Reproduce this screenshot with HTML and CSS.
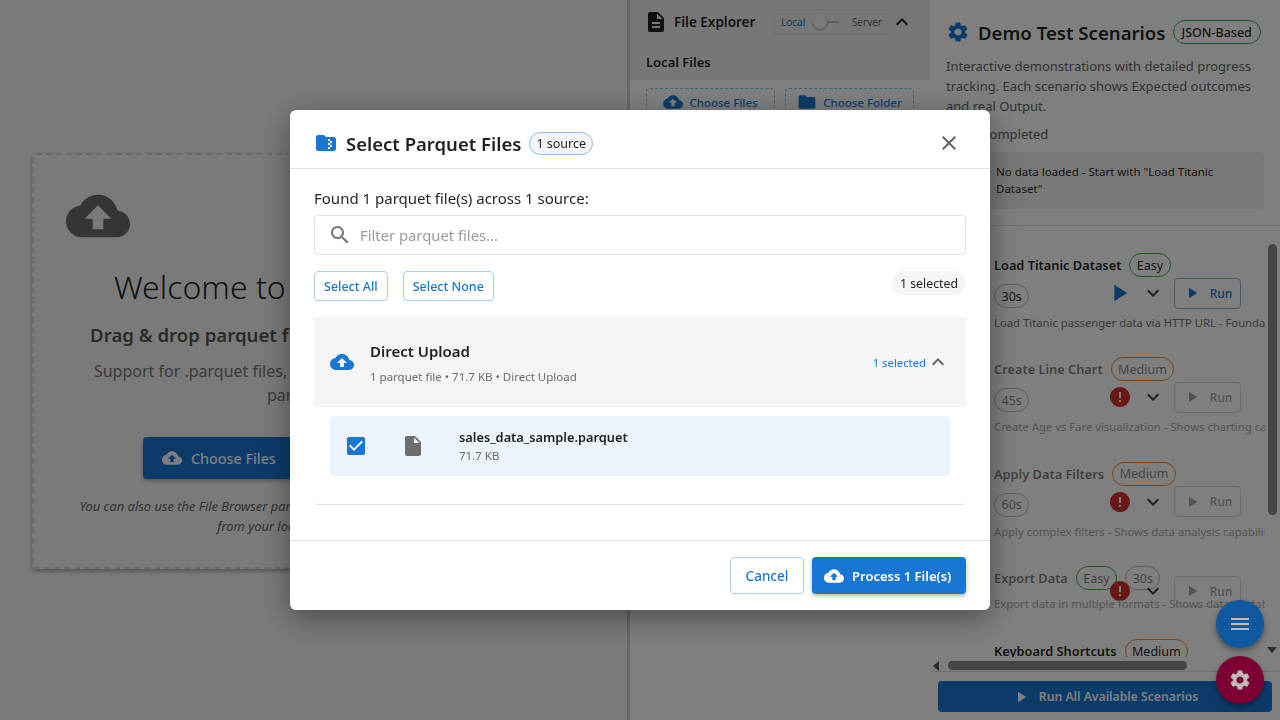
FILE: index.html
```html
<!DOCTYPE html>
<html>
	<head>
		<meta http-equiv="Content-Type" content="text/html; charset=UTF-8" />
		<title>Parquet Explorer</title>
		<link rel="stylesheet" href="styles.css">
	</head>

	<body>
		<svg class="defs" width="0" height="0">
			<symbol id="i-cloud" viewBox="0 0 24 24"><path d="M19.35 10.04C18.67 6.59 15.64 4 12 4 9.11 4 6.6 5.64 5.35 8.04 2.34 8.36 0 10.91 0 14c0 3.31 2.69 6 6 6h13c2.76 0 5-2.24 5-5 0-2.64-2.05-4.78-4.65-4.96zM14 13v4h-4v-4H7l5-5 5 5h-3z"/></symbol>
			<symbol id="i-close" viewBox="0 0 24 24"><path d="M19 6.41 17.59 5 12 10.59 6.41 5 5 6.41 10.59 12 5 17.59 6.41 19 12 13.41 17.59 19 19 17.59 13.41 12z"/></symbol>
			<symbol id="i-search" viewBox="0 0 24 24"><path d="M15.5 14h-.79l-.28-.27C15.41 12.59 16 11.11 16 9.5 16 5.91 13.09 3 9.5 3S3 5.91 3 9.5 5.91 16 9.5 16c1.61 0 3.09-.59 4.23-1.57l.27.28v.79l5 4.99L20.49 19l-4.99-5zm-6 0C7.01 14 5 11.99 5 9.5S7.01 5 9.5 5 14 7.01 14 9.5 11.99 14 9.5 14z"/></symbol>
			<symbol id="i-zip" viewBox="0 0 24 24"><path d="M20 6h-8l-2-2H4c-1.1 0-1.99.9-1.99 2L2 18c0 1.1.9 2 2 2h16c1.1 0 2-.9 2-2V8c0-1.1-.9-2-2-2zm-2 6h-2v2h2v2h-2v2h-2v-2h2v-2h-2v-2h2v-2h-2V8h2v2h2v2z"/></symbol>
			<symbol id="i-file" viewBox="0 0 24 24"><path d="M6 2c-1.1 0-1.99.9-1.99 2L4 20c0 1.1.89 2 1.99 2H18c1.1 0 2-.9 2-2V8l-6-6H6zm7 7V3.5L18.5 9H13z"/></symbol>
			<symbol id="i-doc" viewBox="0 0 24 24"><path d="M14 2H6c-1.1 0-1.99.9-1.99 2L4 20c0 1.1.89 2 1.99 2H18c1.1 0 2-.9 2-2V8l-6-6zm2 16H8v-2h8v2zm0-4H8v-2h8v2zm-3-5V3.5L18.5 9H13z"/></symbol>
			<symbol id="i-check" viewBox="0 0 24 24"><path d="M19 3H5c-1.11 0-2 .9-2 2v14c0 1.1.89 2 2 2h14c1.11 0 2-.9 2-2V5c0-1.1-.89-2-2-2zm-9 14l-5-5 1.41-1.41L10 14.17l7.59-7.59L19 8l-9 9z"/></symbol>
			<symbol id="i-up" viewBox="0 0 24 24"><path d="M12 8l-6 6 1.41 1.41L12 10.83l4.59 4.58L18 14z"/></symbol>
			<symbol id="i-down" viewBox="0 0 24 24"><path d="M16.59 8.59 12 13.17 7.41 8.59 6 10l6 6 6-6z"/></symbol>
			<symbol id="i-play" viewBox="0 0 24 24"><path d="M8 5v14l11-7z"/></symbol>
			<symbol id="i-error" viewBox="0 0 24 24"><path d="M12 2C6.48 2 2 6.48 2 12s4.48 10 10 10 10-4.48 10-10S17.52 2 12 2zm1 15h-2v-2h2v2zm0-4h-2V7h2v6z"/></symbol>
			<symbol id="i-menu" viewBox="0 0 24 24"><path d="M3 18h18v-2H3v2zm0-5h18v-2H3v2zm0-7v2h18V6H3z"/></symbol>
			<symbol id="i-gear" viewBox="0 0 24 24"><path d="M19.14 12.94c.04-.3.06-.61.06-.94 0-.32-.02-.64-.07-.94l2.03-1.58c.18-.14.23-.41.12-.61l-1.92-3.32c-.12-.22-.37-.29-.59-.22l-2.39.96c-.5-.38-1.03-.7-1.62-.94l-.36-2.54c-.04-.24-.24-.41-.48-.41h-3.84c-.24 0-.43.17-.47.41l-.36 2.54c-.59.24-1.13.57-1.62.94l-2.39-.96c-.22-.08-.47 0-.59.22L2.74 8.87c-.12.21-.08.47.12.61l2.03 1.58c-.05.3-.09.63-.09.94s.02.64.07.94l-2.03 1.58c-.18.14-.23.41-.12.61l1.92 3.32c.12.22.37.29.59.22l2.39-.96c.5.38 1.03.7 1.62.94l.36 2.54c.05.24.24.41.48.41h3.84c.24 0 .44-.17.47-.41l.36-2.54c.59-.24 1.13-.56 1.62-.94l2.39.96c.22.08.47 0 .59-.22l1.92-3.32c.12-.22.07-.47-.12-.61l-2.01-1.58zM12 15.6c-1.98 0-3.6-1.62-3.6-3.6s1.62-3.6 3.6-3.6 3.6 1.62 3.6 3.6-1.62 3.6-3.6 3.6z"/></symbol>
			<symbol id="i-folder" viewBox="0 0 24 24"><path d="M10 4H4c-1.1 0-1.99.9-1.99 2L2 18c0 1.1.9 2 2 2h16c1.1 0 2-.9 2-2V8c0-1.1-.9-2-2-2h-8l-2-2z"/></symbol>
		</svg>

		<div class="app">
			<main class="main-panel">
				<div class="dropzone">
					<svg class="drop-icon"><use href="#i-cloud"/></svg>
					<h1>Welcome to Parquet Viewer</h1>
					<h2>Drag &amp; drop parquet files or folders here to begin</h2>
					<p class="drop-text">Support for .parquet files, .zip archives and folders holding parquet files</p>
					<div class="drop-actions">
						<button class="drop-btn"><svg class="ico-20"><use href="#i-cloud"/></svg>Choose Files</button>
						<button class="drop-btn"><svg class="ico-20"><use href="#i-folder"/></svg>Choose Folder</button>
					</div>
					<p class="drop-note">You can also use the File Browser panel on the right to browse and select your files<br>from your local machine or server</p>
				</div>
			</main>

			<aside class="explorer">
				<div class="explorer-head">
					<div class="explorer-title">
						<svg class="doc-icon"><use href="#i-doc"/></svg>
						<span class="explorer-name">File Explorer</span>
						<div class="source-toggle">
							<span class="toggle-local">Local</span>
							<span class="toggle-track"><span class="toggle-thumb"></span></span>
							<span class="toggle-server">Server</span>
						</div>
						<svg class="chevron"><use href="#i-up"/></svg>
					</div>
					<div class="explorer-sub">Local Files</div>
				</div>
				<div class="explorer-btns">
					<button class="dash-btn"><svg class="ico-20"><use href="#i-cloud"/></svg>Choose Files</button>
					<button class="dash-btn"><svg class="ico-20"><use href="#i-folder"/></svg>Choose Folder</button>
				</div>
			</aside>

			<aside class="scenarios">
				<div class="scn-head">
					<div class="scn-title">
						<svg class="gear"><use href="#i-gear"/></svg>
						<span>Demo Test Scenarios</span>
						<span class="chip chip-json">JSON-Based</span>
					</div>
					<p class="scn-desc">Interactive demonstrations with detailed progress tracking. Each scenario shows Expected outcomes and real Output.</p>
					<p class="scn-count">0 of 5 completed</p>
					<div class="scn-alert">No data loaded - Start with "Load Titanic Dataset"</div>
				</div>

				<div class="scn-list">
					<div class="scn-items">
						<div class="scn">
							<div class="scn-top"><span class="scn-name">Load Titanic Dataset</span><span class="chip chip-easy">Easy</span></div>
							<div class="scn-mid">
								<span class="chip chip-time">30s</span>
								<svg class="state state-play"><use href="#i-play"/></svg>
								<svg class="more"><use href="#i-down"/></svg>
								<button class="run run-on"><svg class="ico-18"><use href="#i-play"/></svg>Run</button>
							</div>
							<div class="scn-text">Load Titanic passenger data via HTTP URL - Foundation for all other scenarios</div>
						</div>
						<div class="scn scn-off">
							<div class="scn-top"><span class="scn-name">Create Line Chart</span><span class="chip chip-med">Medium</span></div>
							<div class="scn-mid">
								<span class="chip chip-time">45s</span>
								<svg class="state state-err"><use href="#i-error"/></svg>
								<svg class="more"><use href="#i-down"/></svg>
								<button class="run"><svg class="ico-18"><use href="#i-play"/></svg>Run</button>
							</div>
							<div class="scn-text">Create Age vs Fare visualization - Shows charting capabilities</div>
						</div>
						<div class="scn scn-off">
							<div class="scn-top"><span class="scn-name">Apply Data Filters</span><span class="chip chip-med">Medium</span></div>
							<div class="scn-mid">
								<span class="chip chip-time">60s</span>
								<svg class="state state-err"><use href="#i-error"/></svg>
								<svg class="more"><use href="#i-down"/></svg>
								<button class="run"><svg class="ico-18"><use href="#i-play"/></svg>Run</button>
							</div>
							<div class="scn-text">Apply complex filters - Shows data analysis capabilities</div>
						</div>
						<div class="scn scn-off scn-tight">
							<div class="scn-top"><span class="scn-name">Export Data</span><span class="chip chip-easy">Easy</span><span class="chip chip-time">30s</span></div>
							<div class="scn-mid">
								<svg class="state state-err"><use href="#i-error"/></svg>
								<svg class="more"><use href="#i-down"/></svg>
								<button class="run"><svg class="ico-18"><use href="#i-play"/></svg>Run</button>
							</div>
							<div class="scn-text">Export data in multiple formats - Shows data portability</div>
						</div>
						<div class="scn">
							<div class="scn-top"><span class="scn-name">Keyboard Shortcuts</span><span class="chip chip-med">Medium</span></div>
						</div>
					</div>
					<div class="vbar"></div>
					<div class="arrow-down"></div>
					<div class="hbar"></div>
					<div class="arrow-left"></div>
				</div>

				<div class="run-all-wrap">
					<button class="run-all"><svg class="ico-18"><use href="#i-play"/></svg>Run All Available Scenarios</button>
				</div>
			</aside>
		</div>

		<div class="backdrop"></div>

		<button class="fab fab-blue"><svg><use href="#i-menu"/></svg></button>
		<button class="fab fab-red"><svg><use href="#i-gear"/></svg></button>

		<div class="dialog">
			<div class="dialog-head">
				<svg class="head-icon"><use href="#i-zip"/></svg>
				<span class="head-title">Select Parquet Files</span>
				<span class="chip chip-source">1 source</span>
				<svg class="head-close"><use href="#i-close"/></svg>
			</div>

			<div class="dialog-body">
				<div class="found">Found 1 parquet file(s) across 1 source:</div>
				<div class="filter">
					<svg class="filter-icon"><use href="#i-search"/></svg>
					<span>Filter parquet files...</span>
				</div>
				<div class="select-row">
					<button class="outline-btn">Select All</button>
					<button class="outline-btn">Select None</button>
					<span class="selected-count">1 selected</span>
				</div>

				<div class="source">
					<div class="source-head">
						<svg class="source-icon"><use href="#i-cloud"/></svg>
						<div class="source-info">
							<div class="source-name">Direct Upload</div>
							<div class="source-meta">1 parquet file • 71.7 KB • Direct Upload</div>
						</div>
						<span class="source-count">1 selected</span>
						<svg class="source-chevron"><use href="#i-up"/></svg>
					</div>
					<div class="source-files">
						<div class="file-row">
							<svg class="file-check"><use href="#i-check"/></svg>
							<svg class="file-icon"><use href="#i-file"/></svg>
							<div>
								<div class="file-name">sales_data_sample.parquet</div>
								<div class="file-size">71.7 KB</div>
							</div>
						</div>
					</div>
				</div>
			</div>

			<div class="dialog-foot">
				<button class="foot-cancel">Cancel</button>
				<button class="foot-process"><svg class="ico-20"><use href="#i-cloud"/></svg>Process 1 File(s)</button>
			</div>
		</div>
	</body>
</html>
```

FILE: styles.css
```css
* {
	box-sizing: border-box;
}
html, body {
	height: 100%;
	margin: 0;
	overflow: hidden;
}
body {
	background: #f5f5f5;
	color: rgba(0, 0, 0, 0.87);
	font-family: "Noto Sans", "Open Sans", sans-serif;
}
button {
	font-family: inherit;
	cursor: pointer;
}
svg {
	fill: currentColor;
	flex-shrink: 0;
}
.defs {
	position: absolute;
}
.ico-18 {
	width: 18px;
	height: 18px;
}
.ico-20 {
	width: 20px;
	height: 20px;
}

/* page under the dialog */
.app {
	display: flex;
	height: 720px;
}
.main-panel {
	width: 627px;
	padding: 153px 32px 0 32px;
}
.dropzone {
	height: 416px;
	padding: 29px 31px 0 32px;
	border: 2px dashed #d8d8d8;
	border-radius: 4px;
	box-shadow: 0 2px 4px rgba(0, 0, 0, 0.35);
	text-align: center;
}
.drop-icon {
	display: block;
	width: 64px;
	height: 64px;
	color: #6b6b6b;
}
.dropzone h1 {
	margin: 15px 0 0;
	font-size: 32px;
	font-weight: 300;
	line-height: 48px;
	white-space: nowrap;
}
.dropzone h2 {
	margin: 10px 0 0;
	color: #555;
	font-size: 18.6px;
	font-weight: 600;
	line-height: 28px;
	white-space: nowrap;
}
.drop-text {
	margin: 10px 0 0;
	color: #777;
	font-size: 16px;
	line-height: 24px;
}
.drop-actions {
	display: flex;
	justify-content: center;
	gap: 16px;
	margin-top: 30px;
}
.drop-btn {
	display: flex;
	align-items: center;
	gap: 9px;
	width: 163px;
	height: 42px;
	padding: 0 19px;
	border: 0;
	border-radius: 4px;
	background: #1976d2;
	box-shadow: 0 2px 4px rgba(0, 0, 0, 0.3);
	color: #fff;
	font-size: 14.3px;
	font-weight: 500;
}
.drop-note {
	margin: 17px auto 0;
	color: #666;
	font-size: 12.9px;
	font-style: italic;
	line-height: 20px;
	white-space: nowrap;
}

.explorer {
	width: 303px;
	border-left: 3px solid #cfcfcf;
	background: #fff;
}
.explorer-head {
	height: 80px;
	background: #eeeeee;
	padding: 9px 0 0 14px;
}
.explorer-title {
	display: flex;
	align-items: center;
	height: 26px;
}
.doc-icon {
	width: 24px;
	height: 24px;
}
.explorer-name {
	width: 99px;
	margin-left: 6px;
	font-size: 13.5px;
	font-weight: 600;
}
.source-toggle {
	display: flex;
	align-items: center;
	width: 117px;
	height: 26px;
	padding: 0 7px;
	border: 1px solid #e0e0e0;
	border-radius: 4px;
	font-size: 10px;
}
.toggle-local {
	color: #1976d2;
}
.toggle-server {
	margin-left: auto;
	color: #666;
}
.toggle-track {
	position: relative;
	width: 22px;
	height: 2px;
	margin-left: 12px;
	background: #bdbdbd;
}
.toggle-thumb {
	position: absolute;
	top: -6px;
	left: -4px;
	width: 14px;
	height: 14px;
	border-radius: 50%;
	background: #f5f5f5;
	box-shadow: 0 1px 2px rgba(0, 0, 0, 0.4);
}
.chevron {
	width: 24px;
	height: 24px;
}
.explorer-sub {
	margin-top: 18px;
	margin-left: 2px;
	font-size: 13px;
	font-weight: 600;
	line-height: 18px;
}
.explorer-btns {
	display: flex;
	gap: 10px;
	padding: 8px 0 0 16px;
}
.dash-btn {
	display: flex;
	align-items: center;
	justify-content: center;
	gap: 6px;
	width: 129px;
	height: 28px;
	border: 1px dashed #90b8e0;
	border-radius: 4px;
	background: transparent;
	color: #1976d2;
	font-size: 11.5px;
	font-weight: 500;
}

.scenarios {
	display: flex;
	flex-direction: column;
	width: 350px;
	background: #fff;
}
.scn-head {
	height: 226px;
	padding: 17px 16px 0;
	border-bottom: 1px solid #e0e0e0;
}
.scn-title {
	display: flex;
	align-items: center;
	height: 30px;
	font-size: 18.6px;
	font-weight: 600;
	white-space: nowrap;
}
.gear {
	width: 24px;
	height: 24px;
	margin-right: 8px;
	color: #1976d2;
}
.chip {
	display: inline-flex;
	align-items: center;
	justify-content: center;
	height: 24px;
	padding: 0 6.5px;
	border: 1px solid #bdbdbd;
	border-radius: 12px;
	font-size: 12.5px;
	font-weight: 400;
	white-space: nowrap;
}
.chip-json {
	margin-left: 7px;
	padding: 0 8px;
	border-color: #4caf50;
	font-weight: 500;
}
.scn-desc {
	margin: 9px 0 0;
	color: #666;
	font-size: 13px;
	line-height: 20px;
}
.scn-count {
	margin: 8px 0 0;
	color: #666;
	font-size: 13px;
	line-height: 20px;
}
.scn-alert {
	width: 288px;
	height: 57px;
	margin: 8px 0 0 30px;
	padding: 11px 40px 0 20px;
	border-radius: 4px;
	background: #f0f0f0;
	font-size: 11.5px;
	line-height: 17px;
}
.scn-list {
	position: relative;
	height: 446px;
	border-bottom: 1px solid #e0e0e0;
	overflow: hidden;
}
.scn-items {
	width: 335px;
	height: 431px;
	padding: 27px 0 0 64px;
	overflow: hidden;
}
.scn {
	height: 104.4px;
}
.scn-off {
	color: rgba(0, 0, 0, 0.5);
}
.scn-top {
	display: flex;
	align-items: center;
	gap: 8px;
	height: 24px;
}
.scn-name {
	font-size: 12.8px;
	font-weight: 600;
	white-space: nowrap;
}
.chip-easy {
	border-color: #4caf50;
}
.chip-med {
	border-color: #ed8b3a;
}
.chip-time {
	margin-top: 6px;
}
.scn-top .chip-time {
	margin: 0;
}
.scn-mid {
	display: flex;
	align-items: center;
	width: 247px;
	height: 32px;
}
.state {
	width: 24px;
	height: 24px;
	margin-left: auto;
}
.state-play {
	width: 28px;
	height: 28px;
	margin-right: -1px;
	color: #1976d2;
}
.state-err {
	color: #d32f2f;
}
.more {
	width: 24px;
	height: 24px;
	margin: 0 9px;
	color: #444;
}
.run {
	display: flex;
	align-items: center;
	justify-content: center;
	gap: 9px;
	width: 67px;
	height: 31px;
	border: 1px solid #dcdcdc;
	border-radius: 4px;
	background: transparent;
	color: #a6a6a6;
	font-size: 12px;
	font-weight: 500;
}
.run-on {
	border-color: #8fbbe6;
	color: #1976d2;
}
.scn-text {
	margin-top: 5px;
	font-size: 11.3px;
	line-height: 18px;
	white-space: nowrap;
}
.scn .scn-text {
	color: #777;
}
.scn-off .scn-text {
	color: #aaa;
}
.scn-tight {
	height: 73px;
}
.scn-tight .scn-mid {
	margin-top: -15px;
}
.scn-tight .scn-text {
	margin-top: -12px;
}
.vbar {
	position: absolute;
	top: 18px;
	right: 3px;
	width: 9px;
	height: 271px;
	border-radius: 5px;
	background: #8a8a8a;
}
.arrow-down {
	position: absolute;
	top: 421px;
	right: 3px;
	border: 5px solid transparent;
	border-top: 6px solid #555;
	border-bottom: 0;
}
.hbar {
	position: absolute;
	top: 435px;
	left: 18px;
	width: 239px;
	height: 9px;
	border-radius: 5px;
	background: #8a8a8a;
}
.arrow-left {
	position: absolute;
	top: 435px;
	left: 3px;
	border: 5px solid transparent;
	border-right: 6px solid #555;
	border-left: 0;
}
.run-all-wrap {
	padding: 9px 8px 0;
}
.run-all {
	display: flex;
	align-items: center;
	justify-content: center;
	gap: 9px;
	width: 100%;
	height: 31px;
	padding-top: 1px;
	border: 0;
	border-radius: 4px;
	background: #1976d2;
	color: #fff;
	font-size: 12.2px;
	font-weight: 600;
}

/* over everything */
.backdrop {
	position: fixed;
	inset: 0;
	background: rgba(0, 0, 0, 0.5);
}
.fab {
	position: fixed;
	right: 16px;
	display: flex;
	align-items: center;
	justify-content: center;
	width: 48px;
	height: 48px;
	border: 0;
	border-radius: 50%;
	box-shadow: 0 3px 6px rgba(0, 0, 0, 0.4);
	color: #bbb;
}
.fab svg {
	width: 24px;
	height: 24px;
}
.fab-blue {
	top: 600px;
	background: #0f5a9e;
}
.fab-red {
	top: 656px;
	background: #7d0035;
}

.dialog {
	position: fixed;
	top: 110px;
	left: 290px;
	display: flex;
	flex-direction: column;
	width: 700px;
	height: 500px;
	border-radius: 6px;
	background: #fff;
	box-shadow: 0 8px 30px rgba(0, 0, 0, 0.4);
}
.dialog-head {
	display: flex;
	align-items: center;
	height: 59px;
	padding: 8px 29px 0 24px;
	border-bottom: 1px solid #e0e0e0;
}
.head-icon {
	width: 24px;
	height: 24px;
	color: #1976d2;
}
.head-title {
	margin-left: 8px;
	font-size: 18.5px;
	font-weight: 600;
}
.chip-source {
	margin-left: 8px;
	height: 23px;
	padding: 0 6px;
	border-color: #90bde8;
	background: #f5f5f5;
}
.head-close {
	width: 24px;
	height: 24px;
	margin-left: auto;
	color: #666;
}
.dialog-body {
	height: 371px;
	padding: 19px 24px 0;
}
.found {
	font-size: 15px;
	line-height: 20px;
}
.filter {
	display: flex;
	align-items: center;
	height: 40px;
	margin-top: 7px;
	padding-left: 13px;
	border: 1px solid #e0e0e0;
	border-radius: 4px;
	color: #9a9a9a;
	font-size: 14.8px;
}
.filter-icon {
	width: 24px;
	height: 24px;
	margin-right: 8px;
	color: #757575;
}
.select-row {
	display: flex;
	align-items: flex-start;
	gap: 15px;
	margin-top: 16px;
}
.outline-btn {
	height: 30px;
	padding: 0 9px;
	border: 1px solid #a9cdf0;
	border-radius: 4px;
	background: #fff;
	color: #1976d2;
	font-size: 12.5px;
	font-weight: 500;
}
.selected-count {
	display: flex;
	align-items: center;
	height: 24px;
	margin-left: auto;
	padding: 0 8px;
	border-radius: 12px;
	background: #f5f5f5;
	font-size: 12.3px;
}
.source {
	height: 188px;
	margin-top: 16px;
	border-bottom: 1px solid #e0e0e0;
	border-radius: 0 0 4px 4px;
}
.source-head {
	display: flex;
	align-items: center;
	height: 90px;
	padding: 0 16px;
	background: #f5f5f5;
}
.source-icon {
	width: 24px;
	height: 24px;
	color: #1976d2;
}
.source-info {
	margin-left: 16px;
	padding-top: 2px;
}
.source-name {
	font-size: 15px;
	font-weight: 600;
	line-height: 22px;
}
.source-meta {
	margin-top: 6px;
	color: #6b6b6b;
	font-size: 11.5px;
	line-height: 18px;
}
.source-count {
	margin-left: auto;
	color: #1976d2;
	font-size: 11.3px;
}
.source-chevron {
	width: 24px;
	height: 24px;
	color: #666;
}
.source-files {
	padding: 9px 16px 0;
}
.file-row {
	display: flex;
	align-items: center;
	height: 60px;
	padding-left: 14px;
	border-radius: 4px;
	background: #edf3fb;
}
.file-check {
	width: 24px;
	height: 24px;
	color: #1976d2;
}
.file-icon {
	width: 24px;
	height: 24px;
	margin: 0 34px 0 33px;
	color: #6d6d6d;
}
.file-name {
	font-size: 12.8px;
	font-weight: 600;
	line-height: 18px;
}
.file-size {
	margin-top: 1px;
	color: #6b6b6b;
	font-size: 11.5px;
	line-height: 18px;
}
.dialog-foot {
	display: flex;
	justify-content: flex-end;
	gap: 8px;
	height: 70px;
	padding: 16px 24px 0;
	border-top: 1px solid #e0e0e0;
}
.foot-cancel {
	width: 74px;
	height: 37px;
	border: 1px solid #a9cdf0;
	border-radius: 4px;
	background: #fff;
	color: #1976d2;
	font-size: 13.5px;
	font-weight: 500;
}
.foot-process {
	display: flex;
	align-items: center;
	gap: 8px;
	width: 154px;
	height: 37px;
	padding: 0 12px;
	border: 0;
	border-radius: 4px;
	background: #1976d2;
	box-shadow: 0 2px 4px rgba(0, 0, 0, 0.3);
	color: #fff;
	font-size: 13px;
	font-weight: 600;
}
```
